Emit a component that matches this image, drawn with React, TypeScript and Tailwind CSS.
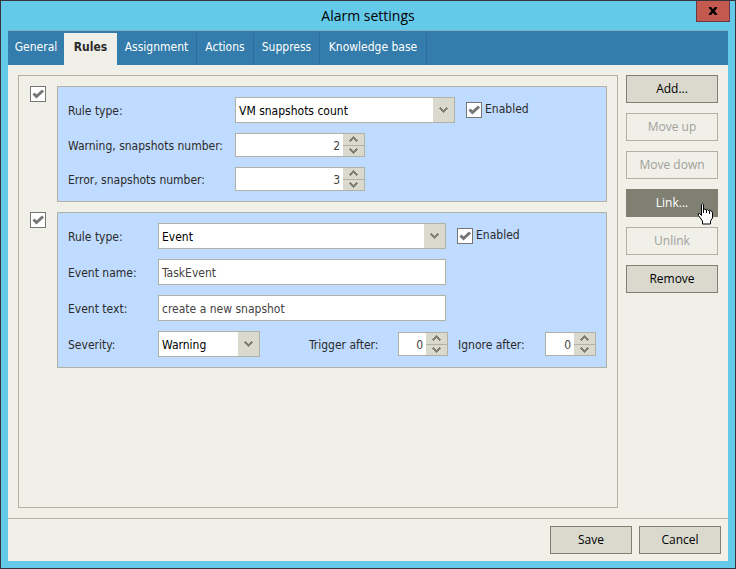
import { useState } from 'react';
import type { ReactNode } from 'react';

const tabs = [
  { name: 'General', style: 'w-14 text-white' },
  { name: 'Rules', style: 'w-[53px] bg-[#f0f0e8] font-bold text-[#2b2b2b]' },
  { name: 'Assignment', style: 'w-20 border-r border-[#2a6d9b] text-white' },
  { name: 'Actions', style: 'w-[57px] border-r border-[#2a6d9b] text-white' },
  { name: 'Suppress', style: 'w-[66px] border-r border-[#2a6d9b] text-white' },
  { name: 'Knowledge base', style: 'w-[107px] border-r border-[#2a6d9b] text-white' },
];

function Chevron({ up = false }: { up?: boolean }) {
  return (
    <svg width="9" height="6" viewBox="0 0 9 6" fill="#808072" shapeRendering="crispEdges" aria-hidden="true">
      {up ? (
        <path d="M4 0h1v1h1v1h1v1h1v1h1v1h-1v1h-1v-1h-1v-1h-1v-1h-1v1h-1v1h-1v1h-1v-1h-1v-1h1v-1h1v-1h1v-1h1z" />
      ) : (
        <path d="M4 6h1v-1h1v-1h1v-1h1v-1h1v-1h-1v-1h-1v1h-1v1h-1v1h-1v-1h-1v-1h-1v-1h-1v1h-1v1h1v1h1v1h1v1h1z" />
      )}
    </svg>
  );
}

function Tick({ label }: { label?: string }) {
  return (
    <label className="flex items-center gap-[3px]">
      <span className="relative block size-4">
        <input
          type="checkbox"
          defaultChecked
          aria-label={label ? undefined : 'Use rule'}
          className="peer block size-4 appearance-none border border-[#767676] bg-white"
        />
        <svg
          className="pointer-events-none absolute inset-0 hidden peer-checked:block"
          width="16"
          height="16"
          viewBox="0 0 16 16"
          aria-hidden="true"
        >
          <path d="M3.5 7.500l3 3L13 4.5" fill="none" stroke="#757575" strokeWidth="3" />
        </svg>
      </span>
      {label && <span className="pb-[2px]">{label}</span>}
    </label>
  );
}

function Drop({ id, options, width }: { id: string; options: string[]; width: string }) {
  return (
    <div className={`relative h-[26px] ${width}`}>
      <select
        id={id}
        className="size-full appearance-none border border-[#b1b1a6] bg-white pt-[2px] pr-6 pl-[3px] text-black"
      >
        {options.map((o) => (
          <option key={o}>{o}</option>
        ))}
      </select>
      <span className="pointer-events-none absolute inset-y-px right-px flex w-[21px] items-center justify-center bg-[#d9d9ce]">
        <Chevron />
      </span>
    </div>
  );
}

function Spinner({ id, start, width }: { id: string; start: number; width: string }) {
  const [value, setValue] = useState(start);
  return (
    <div className={`flex h-6 border border-[#b1b1a6] bg-white ${width}`}>
      <input
        id={id}
        value={value}
        onChange={(e) => setValue(Number(e.target.value) || 0)}
        className="min-w-0 flex-1 pt-[2px] pr-[3px] text-right text-[#444]"
      />
      <div className="flex w-[21px] flex-col gap-px bg-[#b1b1a6]">
        <button
          aria-label="Increase"
          onClick={() => setValue(value + 1)}
          className="flex flex-1 items-center justify-center bg-[#d9d9ce]"
        >
          <Chevron up />
        </button>
        <button
          aria-label="Decrease"
          onClick={() => setValue(Math.max(0, value - 1))}
          className="flex flex-1 items-center justify-center bg-[#d9d9ce]"
        >
          <Chevron />
        </button>
      </div>
    </div>
  );
}

function Field({ id, label, width, children }: { id: string; label: string; width: string; children: ReactNode }) {
  return (
    <div className="flex items-center">
      <label htmlFor={id} className={`shrink-0 pt-[2px] ${width}`}>
        {label}
      </label>
      {children}
    </div>
  );
}

function Rule({ children }: { children: ReactNode }) {
  return (
    <section className="flex items-start gap-[11px]">
      <Tick />
      <div className="flex flex-1 flex-col gap-[10px] border border-[#b1b1a6] bg-[#bfdbff] p-[10px]">{children}</div>
    </section>
  );
}

function Action({ label, width, disabled, active }: { label: string; width: string; disabled?: boolean; active?: boolean }) {
  const look = disabled
    ? 'border-[#b1b1a6] text-[#a0a09c]'
    : active
      ? 'border-[#808072] bg-[#808072] text-white'
      : 'border-[#808072] bg-[#d9d9ce] text-black';
  return (
    <button
      disabled={disabled}
      className={`block h-7 border pb-px font-['Open_Sans','Noto_Sans',sans-serif] text-[12px] leading-4 ${width} ${look}`}
    >
      {label}
    </button>
  );
}

function HandCursor() {
  return (
    <svg
      className="pointer-events-none absolute top-[14px] left-[70px]"
      width="18"
      height="22"
      viewBox="0 0 18 22"
      fill="white"
      stroke="black"
      aria-hidden="true"
    >
      <path d="M5.500 12.500V1.500q1-1.500 2 0v5q1.500-1 2.500.5 1.500-1 2.500.5 1.500-1 2.500.5 1.500 0 1.500 2v5l-2 3v3h-8v-3l-4-5.500q-1-2.500 1-2l2 2" />
      <path d="M7.500 6v4M10.500 7v3M13.500 8v3" />
    </svg>
  );
}

export default function App() {
  return (
    <div className="flex min-h-screen flex-col border border-[#35353b] bg-[#65caea] px-[7px] pb-[7px] font-['DejaVu_Sans_Condensed','DejaVu_Sans',sans-serif] text-[12px] leading-4 text-[#2b2b2b]">
      <header className="relative flex h-[30px] items-center justify-center border-b border-[#7fb0c4]">
        <h1 className="font-['Open_Sans','Noto_Sans',sans-serif] text-[14px] leading-5 text-black">Alarm settings</h1>
        <button
          aria-label="Close"
          className="absolute top-0 -right-[2px] flex h-[21px] w-[34px] items-center justify-center border border-t-0 border-[#693a43] bg-[#c4594f]"
        >
          <svg width="10" height="8" viewBox="0 0 10 8" aria-hidden="true">
            <path d="M1.500 0l7 8M8.500 0l-7 8" stroke="black" strokeWidth="2.400" />
          </svg>
        </button>
      </header>

      <nav role="tablist" className="flex h-[34px] bg-[#337cab] pt-[2px]">
        {tabs.map((t) => (
          <button
            key={t.name}
            role="tab"
            aria-selected={t.name === 'Rules'}
            className={`pb-1 text-center whitespace-nowrap ${t.style}`}
          >
            {t.name}
          </button>
        ))}
      </nav>

      <main className="flex flex-1 gap-2 bg-[#f0f0e8] p-[10px]">
        <div className="flex flex-1 flex-col gap-[10px] border border-[#b1b1a6] py-[10px] pr-[10px] pl-[11px]">
          <Rule>
            <div className="flex items-center gap-[11px]">
              <Field id="type1" label="Rule type:" width="w-[167px]">
                <Drop id="type1" options={['VM snapshots count', 'Event']} width="w-[220px]" />
              </Field>
              <Tick label="Enabled" />
            </div>
            <Field id="warn" label="Warning, snapshots number:" width="w-[167px]">
              <Spinner id="warn" start={2} width="w-[130px]" />
            </Field>
            <Field id="error" label="Error, snapshots number:" width="w-[167px]">
              <Spinner id="error" start={3} width="w-[130px]" />
            </Field>
          </Rule>

          <Rule>
            <div className="flex items-center gap-[11px]">
              <Field id="type2" label="Rule type:" width="w-[90px]">
                <Drop id="type2" options={['Event', 'VM snapshots count']} width="w-[288px]" />
              </Field>
              <Tick label="Enabled" />
            </div>
            <Field id="name" label="Event name:" width="w-[90px]">
              <input
                id="name"
                defaultValue="TaskEvent"
                className="h-[26px] w-[288px] border border-[#b1b1a6] bg-white px-[3px] pt-[2px] text-[#444]"
              />
            </Field>
            <Field id="text" label="Event text:" width="w-[90px]">
              <input
                id="text"
                defaultValue="create a new snapshot"
                className="h-[26px] w-[288px] border border-[#b1b1a6] bg-white px-[3px] pt-[2px] text-[#444]"
              />
            </Field>
            <div className="flex items-center gap-[10px]">
              <Field id="severity" label="Severity:" width="w-[90px]">
                <Drop id="severity" options={['Warning', 'Error', 'Information']} width="w-[102px]" />
              </Field>
              <div className="ml-auto">
                <Field id="trigger" label="Trigger after:" width="w-[89px]">
                  <Spinner id="trigger" start={0} width="w-[50px]" />
                </Field>
              </div>
              <Field id="ignore" label="Ignore after:" width="w-[87px]">
                <Spinner id="ignore" start={0} width="w-[51px]" />
              </Field>
            </div>
          </Rule>
        </div>

        <aside className="flex flex-col gap-[10px]">
          <Action label="Add..." width="w-[92px]" />
          <Action label="Move up" width="w-[92px]" disabled />
          <Action label="Move down" width="w-[92px]" disabled />
          <div className="relative z-10">
            <Action label="Link..." width="w-[92px]" active />
            <HandCursor />
          </div>
          <Action label="Unlink" width="w-[92px]" disabled />
          <Action label="Remove" width="w-[92px]" />
        </aside>
      </main>

      <footer className="flex justify-end gap-[7px] border-t border-[#b1b1a6] bg-[#f0f0e8] p-[7px]">
        <Action label="Save" width="w-[82px]" />
        <Action label="Cancel" width="w-[82px]" />
      </footer>
    </div>
  );
}
